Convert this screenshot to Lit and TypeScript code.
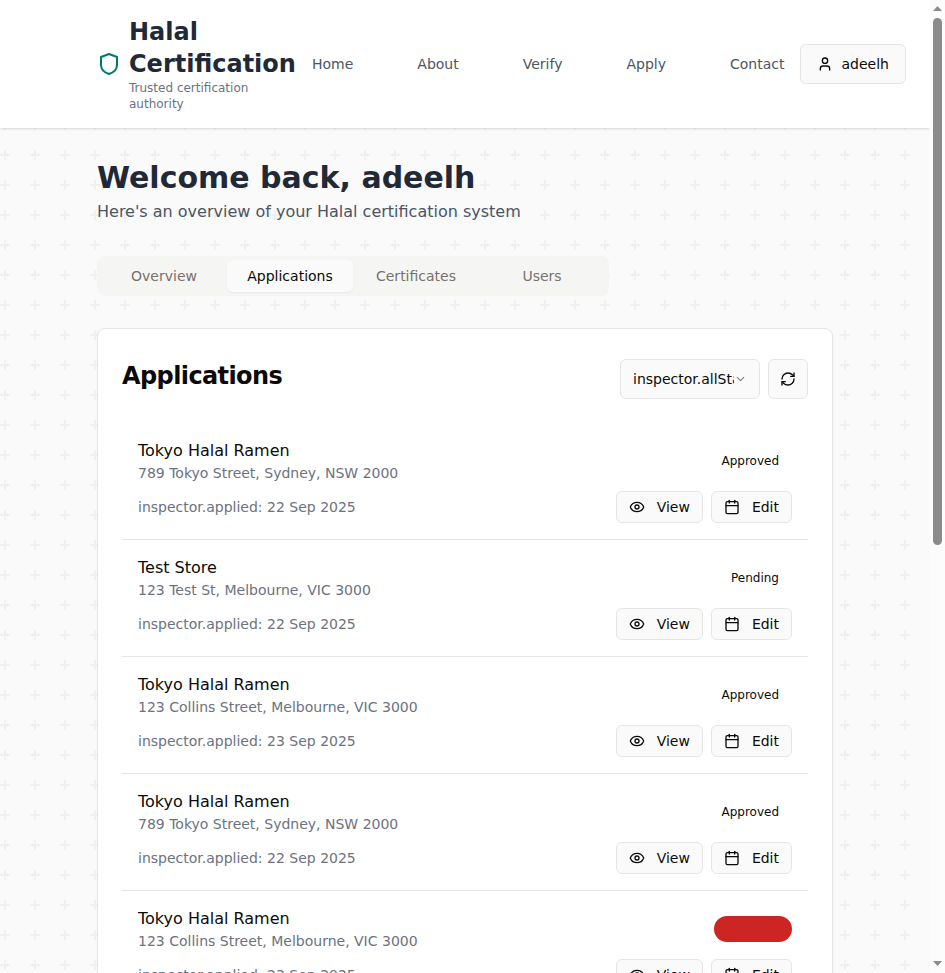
import { LitElement, html, css, svg } from "lit";
import { customElement } from "lit/decorators.js";

const icon = (body: unknown, cls = "icon") => html`<svg class=${cls} viewBox="0 0 24 24" fill="none" stroke="currentColor" stroke-width="2" stroke-linecap="round" stroke-linejoin="round">${body}</svg>`;

const shield = svg`<path d="M20 13c0 5-3.5 7.5-8 9-4.5-1.5-8-4-8-9V5l8-3 8 3z"/>`;
const user = svg`<path d="M19 21v-2a4 4 0 0 0-4-4H9a4 4 0 0 0-4 4v2"/><circle cx="12" cy="7" r="4"/>`;
const refresh = svg`<path d="M3 12a9 9 0 0 1 9-9 9.75 9.75 0 0 1 6.74 2.74L21 8"/><path d="M21 3v5h-5"/><path d="M21 12a9 9 0 0 1-9 9 9.75 9.75 0 0 1-6.74-2.74L3 16"/><path d="M8 16H3v5"/>`;
const eye = svg`<path d="M2.062 12.348a1 1 0 0 1 0-.696 10.75 10.75 0 0 1 19.876 0 1 1 0 0 1 0 .696 10.75 10.75 0 0 1-19.876 0"/><circle cx="12" cy="12" r="3"/>`;
const calendar = svg`<path d="M8 2v4"/><path d="M16 2v4"/><rect width="18" height="18" x="3" y="4" rx="2"/><path d="M3 10h18"/>`;
const chevron = svg`<path d="m6 9 6 6 6-6"/>`;

const applications = [
  { name: "Tokyo Halal Ramen", address: "789 Tokyo Street, Sydney, NSW 2000", date: "22 Sep 2025", status: "Approved" },
  { name: "Test Store", address: "123 Test St, Melbourne, VIC 3000", date: "22 Sep 2025", status: "Pending" },
  { name: "Tokyo Halal Ramen", address: "123 Collins Street, Melbourne, VIC 3000", date: "23 Sep 2025", status: "Approved" },
  { name: "Tokyo Halal Ramen", address: "789 Tokyo Street, Sydney, NSW 2000", date: "22 Sep 2025", status: "Approved" },
  { name: "Tokyo Halal Ramen", address: "123 Collins Street, Melbourne, VIC 3000", date: "23 Sep 2025", status: "Rejected" },
];

@customElement("app-root")
export class AppRoot extends LitElement {
  static styles = css`
    :host { display: flex; height: 973px; overflow: hidden; font: 14px/20px "DejaVu Sans", sans-serif; color: #0c0a09; }
    * { box-sizing: border-box; }
    h1, h2, h3, p { margin: 0; }
    svg { display: block; flex: none; }
    .page {
      width: 930px; flex: none; overflow: hidden; background-color: #fafafa;
      background-image: url("data:image/svg+xml,%3Csvg width='60' height='60' viewBox='0 0 60 60' xmlns='http://www.w3.org/2000/svg'%3E%3Cpath fill='%2300796b' fill-opacity='0.06' d='M36 34v-4h-2v4h-4v2h4v4h2v-4h4v-2h-4zm0-30V0h-2v4h-4v2h4v4h2V6h4V4h-4zM6 34v-4H4v4H0v2h4v4h2v-4h4v-2H6zM6 4V0H4v4H0v2h4v4h2V6h4V4H6z'/%3E%3C/svg%3E");
    }
    .header { height: 128px; background: #fff; padding: 0 24px 0 97px; display: flex; align-items: center; box-shadow: 0 1px 3px rgba(0,0,0,.1), 0 1px 2px -1px rgba(0,0,0,.1); }
    .logo { width: 24px; height: 24px; color: #00796b; margin-right: 8px; }
    .brand { width: 183px; flex: none; }
    .brand-name { font-size: 24px; line-height: 32px; font-weight: 700; color: #1f2937; }
    .tagline { font-size: 12px; line-height: 16px; color: #6b7280; width: 150px; }
    .nav { display: flex; gap: 64px; color: #4b5563; flex: none; margin-right: 16px; }
    .btn { display: inline-flex; align-items: center; justify-content: center; border: 1px solid #e5e5e5; border-radius: 6px; background: #fafafa; white-space: nowrap; flex: none; }
    .icon { width: 16px; height: 16px; }
    .account { height: 40px; padding: 0 16px; gap: 8px; }
    .main { width: 736px; margin: 0 auto; padding-top: 32px; }
    .welcome { font-size: 30px; line-height: 36px; font-weight: 700; color: #1f2937; }
    .sub { font-size: 16px; line-height: 24px; color: #4b5563; margin-top: 4px; }
    .tabs { width: 512px; height: 40px; margin: 32px 0; padding: 4px; border-radius: 8px; background: #f5f5f4; color: #78716c; display: grid; grid-template-columns: repeat(4, 1fr); }
    .tab { display: flex; align-items: center; justify-content: center; border-radius: 6px; }
    .active { background: #fafafa; color: #0c0a09; box-shadow: 0 1px 2px rgba(0,0,0,.05); }
    .card { background: #fff; border: 1px solid #e5e5e5; border-radius: 8px; box-shadow: 0 1px 2px rgba(0,0,0,.05); padding: 30px 24px 24px; }
    .card-head { display: flex; justify-content: space-between; margin-bottom: 24px; }
    .card-title { font-size: 24px; line-height: 34px; font-weight: 700; letter-spacing: -0.6px; }
    .controls { display: flex; gap: 8px; }
    .select { width: 140px; height: 40px; padding: 0 12px; }
    .value { flex: 1; overflow: hidden; }
    .chevron { width: 13px; height: 16px; opacity: .5; }
    .refresh { width: 40px; height: 40px; }
    .item { padding: 16px; border-bottom: 1px solid #e5e5e5; }
    .row { display: flex; justify-content: space-between; align-items: center; color: #6b7280; }
    .name { font-size: 16px; line-height: 24px; color: #0c0a09; font-weight: 400; }
    .badge { font-size: 12px; line-height: 16px; padding: 4px 12px; border: 1px solid transparent; border-radius: 13px; color: #0c0a09; }
    .rejected { background: #cd2424; color: #cd2424; }
    .foot { margin-top: 8px; }
    .actions { display: flex; gap: 8px; color: #0c0a09; }
    .small { height: 32px; padding: 0 12px; gap: 12px; }
    .scroll { width: 15px; flex: none; background: #fcfcfc; display: flex; flex-direction: column; align-items: center; padding: 6px 0 7px; }
    .arrow { width: 9px; height: 5px; fill: #8b8b8b; }
    .thumb { width: 9px; height: 527px; margin: 7px 0 auto; border-radius: 5px; background: #8b8b8b; }
  `;

  render() {
    return html`
      <div class="page">
        <header class="header">
          ${icon(shield, "logo")}
          <div class="brand">
            <div class="brand-name">Halal Certification</div>
            <p class="tagline">Trusted certification authority</p>
          </div>
          <nav class="nav">${["Home", "About", "Verify", "Apply", "Contact"].map((n) => html`<span>${n}</span>`)}</nav>
          <div class="btn account">${icon(user)}<span>adeelh</span></div>
        </header>
        <main class="main">
          <h1 class="welcome">Welcome back, adeelh</h1>
          <p class="sub">Here's an overview of your Halal certification system</p>
          <div class="tabs">${["Overview", "Applications", "Certificates", "Users"].map((t) => html`<div class="tab ${t === "Applications" ? "active" : ""}">${t}</div>`)}</div>
          <section class="card">
            <div class="card-head">
              <h2 class="card-title">Applications</h2>
              <div class="controls">
                <div class="btn select"><span class="value">inspector.allStatus</span>${icon(chevron, "chevron")}</div>
                <div class="btn refresh">${icon(refresh)}</div>
              </div>
            </div>
            ${applications.map((a) => html`
              <div class="item">
                <div class="row">
                  <div><h3 class="name">${a.name}</h3><p>${a.address}</p></div>
                  <span class="badge ${a.status.toLowerCase()}">${a.status}</span>
                </div>
                <div class="row foot">
                  <span>inspector.applied: ${a.date}</span>
                  <div class="actions">
                    <div class="btn small">${icon(eye)}<span>View</span></div>
                    <div class="btn small">${icon(calendar)}<span>Edit</span></div>
                  </div>
                </div>
              </div>`)}
          </section>
        </main>
      </div>
      <div class="scroll">
        <svg class="arrow" viewBox="0 0 9 5"><path d="M0 5 4.5 0 9 5z"/></svg>
        <div class="thumb"></div>
        <svg class="arrow" viewBox="0 0 9 5"><path d="M0 0h9L4.5 5z"/></svg>
      </div>`;
  }
}
